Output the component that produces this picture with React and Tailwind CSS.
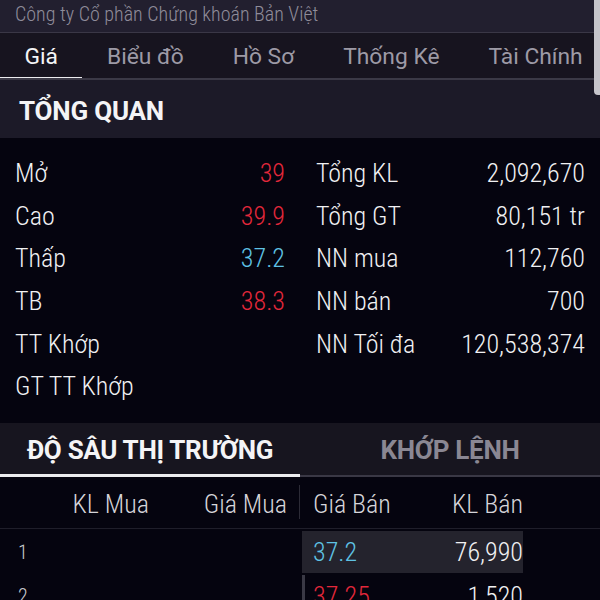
import React from "react";

const cond = { fontFamily: '"Roboto Condensed", "Roboto", "Liberation Sans", sans-serif' };

const stats = [
  ["Mở", "39", "text-[#e3283b]", "Tổng KL", "2,092,670"],
  ["Cao", "39.9", "text-[#e3283b]", "Tổng GT", "80,151 tr"],
  ["Thấp", "37.2", "text-[#5fc2e4]", "NN mua", "112,760"],
  ["TB", "38.3", "text-[#e3283b]", "NN bán", "700"],
  ["TT Khớp", "", "", "NN Tối đa", "120,538,374"],
  ["GT TT Khớp", "", "", "", ""],
];

export default function App() {
  return (
    <div className="relative w-[600px] h-[600px] overflow-hidden bg-[#05040f] font-['Roboto',sans-serif]">
      {/* top bar */}
      <div className="h-[33px] bg-[#221f2f] border-b border-[#3a3746] flex items-center px-[15px]">
        <span style={cond} className="text-[20px] font-light text-[#8f8c9a] leading-none -mt-[4px]">
          Công ty Cổ phần Chứng khoán Bản Việt
        </span>
      </div>

      {/* tabs */}
      <div className="h-[47px] bg-[#17141f] border-b-2 border-[#3b3946] flex overflow-hidden">
        {["Giá", "Biểu đồ", "Hồ Sơ", "Thống Kê", "Tài Chính"].map((t, i) => (
          <div
            key={t}
            className={
              "relative shrink-0 whitespace-nowrap px-[24.5px] pt-[3px] flex items-center text-[22.8px] " +
              (i === 0 ? "text-[#f4f4f6]" : "text-[#9d9aa6]")
            }
          >
            {t}
            {i === 0 && <div className="absolute left-0 right-0 -bottom-[2px] h-[3px] bg-[#ececef]" />}
          </div>
        ))}
      </div>

      {/* section header */}
      <div className="h-[58px] bg-[#1c1a28] flex items-center px-[19px] pt-[4px]">
        <span className="text-[26px] font-bold text-[#f4f4f6] tracking-[-0.2px]">TỔNG QUAN</span>
      </div>

      {/* stats */}
      <div style={cond} className="pt-[14px] pb-[15px] font-light text-[26px] text-[#f1f1f3]">
        {stats.map(([l1, v1, c1, l2, v2]) => (
          <div key={l1} className="h-[42.6px] flex items-center pl-[15px] leading-none">
            <div className="w-[270px] flex justify-between">
              <span>{l1}</span>
              <span className={c1}>{v1}</span>
            </div>
            <div className="ml-[31px] w-[269px] flex justify-between">
              <span>{l2}</span>
              <span>{v2}</span>
            </div>
          </div>
        ))}
      </div>

      {/* depth tabs */}
      <div className="h-[54px] bg-[#17151f] flex">
        <div className="relative w-[300px] pt-[2px] flex items-center justify-center text-[26px] font-bold text-[#f4f4f6] tracking-[-0.3px] whitespace-nowrap">
          ĐỘ SÂU THỊ TRƯỜNG
          <div className="absolute left-0 right-0 bottom-0 h-[3px] bg-[#ececef]" />
        </div>
        <div className="relative w-[300px] pt-[2px] flex items-center justify-center text-[26px] font-bold text-[#8a8793] tracking-[-0.3px] whitespace-nowrap">
          KHỚP LỆNH
          <div className="absolute left-0 right-0 bottom-0 h-[2px] bg-[#3a3845]" />
        </div>
      </div>

      {/* table header */}
      <div style={cond} className="h-[52px] border-b border-[#1f1e2a] flex items-center pt-[4px] font-light text-[26px] text-[#d6d5da]">
        <div className="w-[60px]" />
        <div className="w-[89px] text-right">KL Mua</div>
        <div className="w-[138px] text-right">Giá Mua</div>
        <div className="w-[15px] h-[34px] flex justify-end pr-[2px] -mt-[4px]">
          <div className="w-[1px] h-full bg-[#2c2b36]" />
        </div>
        <div className="w-[221px] flex justify-between pl-[11px]">
          <span>Giá Bán</span>
          <span>KL Bán</span>
        </div>
      </div>

      {/* rows */}
      <div style={cond} className="pt-[2px] font-light text-[26px] text-[#f1f1f3]">
        <div className="h-[42px] flex items-center mb-[2px]">
          <div className="w-[60px] pl-[18px] text-[20px] text-[#c9c9cd]">1</div>
          <div className="w-[89px]" />
          <div className="w-[138px]" />
          <div className="w-[15px]" />
          <div className="w-[221px] h-full bg-[#24232d] flex items-center justify-between pl-[11px] pt-[2px]">
            <span className="text-[#5fc2e4]">37.2</span>
            <span>76,990</span>
          </div>
        </div>
        <div className="h-[42px] flex items-center">
          <div className="w-[60px] pl-[18px] text-[20px] text-[#c9c9cd]">2</div>
          <div className="w-[89px]" />
          <div className="w-[138px]" />
          <div className="w-[15px]" />
          <div className="w-[221px] h-full border-l-[3px] border-[#3a3945] flex items-center justify-between pl-[8px] pt-[2px]">
            <span className="text-[#e3283b]">37.25</span>
            <span>1,520</span>
          </div>
        </div>
      </div>

      {/* scrollbar */}
      <div className="absolute top-0 right-0 w-[6px] h-[95px] bg-[#c6c5cb] rounded-bl-[4px]" />
    </div>
  );
}
